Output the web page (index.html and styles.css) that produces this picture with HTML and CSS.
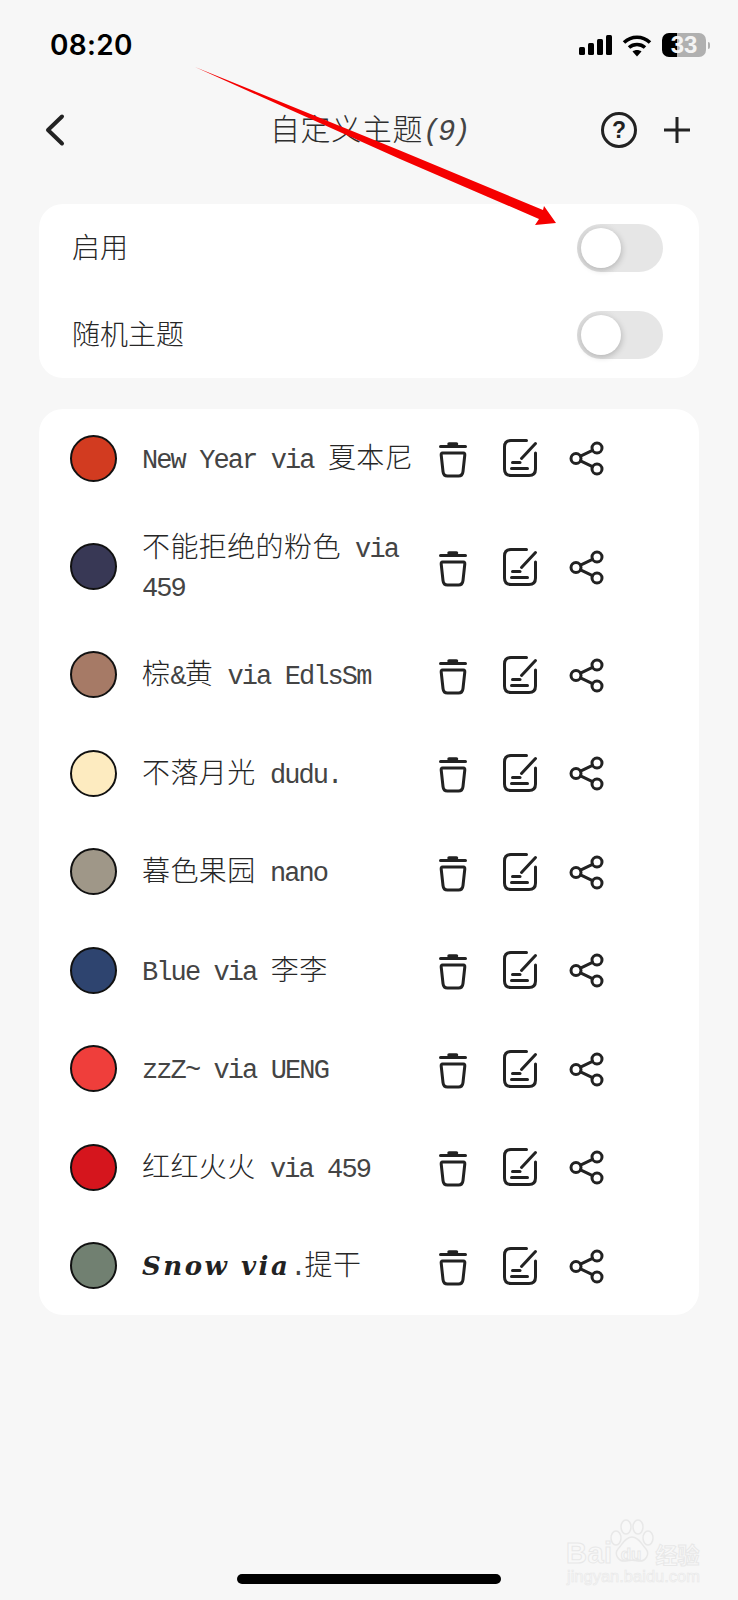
FILE: index.html
```html
<!DOCTYPE html>
<html lang="zh">
<head>
<meta charset="utf-8">
<title>自定义主题</title>
<link rel="stylesheet" href="styles.css">
</head>
<body>
<div class="page">
  <header class="status">
    <span class="time">08:20</span>
    <div class="status-icons">
      <svg class="signal" width="33" height="22" viewBox="0 0 33 22"><rect x="0" y="13" width="6" height="8" rx="1.5"/><rect x="9" y="9" width="6" height="12" rx="1.5"/><rect x="18" y="5" width="6" height="16" rx="1.5"/><rect x="27" y="1" width="6" height="20" rx="1.5"/></svg>
      <svg class="wifi" width="30" height="23" viewBox="0 0 30 23"><path d="M2 8.500C9.500 1.500 20.500 1.500 28 8.500" fill="none" stroke="#000" stroke-width="3.600"/><path d="M7 13.500C11.500 9.500 18.500 9.500 23 13.500" fill="none" stroke="#000" stroke-width="3.600"/><path d="M10.500 17.500C13 15.500 17 15.500 19.500 17.500L15 22.500Z"/></svg>
      <div class="battery-wrap"><div class="battery">33</div><span class="nub"></span></div>
    </div>
  </header>

  <nav class="nav">
    <svg class="back" width="22" height="34" viewBox="0 0 22 34"><path d="M19 3.500L5 17L19 30.500" fill="none" stroke="#222" stroke-width="4" stroke-linecap="round" stroke-linejoin="round"/></svg>
    <h1 class="title"><span class="han-title">自定义主题</span><span class="title-num">(9)</span></h1>
    <div class="nav-right">
      <span class="help">?</span>
      <svg class="plus" width="26" height="26" viewBox="0 0 26 26"><path d="M0.500 13H25.500M13 0.500V25.500" stroke="#222" stroke-width="3" stroke-linecap="round"/></svg>
    </div>
  </nav>

  <section class="card settings">
    <div class="setting"><span class="han label">启用</span><span class="toggle"><span class="thumb"></span></span></div>
    <div class="setting"><span class="han label">随机主题</span><span class="toggle"><span class="thumb"></span></span></div>
  </section>

  <section class="card themes">
    <div class="row">
      <span class="dot c1"></span>
      <div class="name">New Year via <span class="han">夏本尼</span></div>
      <div class="actions"><svg class="ic" viewBox="0 0 40 40"><use href="#trash"/></svg><svg class="ic" viewBox="0 0 40 40"><use href="#edit"/></svg><svg class="ic" viewBox="0 0 40 40"><use href="#share"/></svg></div>
    </div>
    <div class="row">
      <span class="dot c2"></span>
      <div class="name"><span class="han">不能拒绝的粉色</span> via 459</div>
      <div class="actions"><svg class="ic" viewBox="0 0 40 40"><use href="#trash"/></svg><svg class="ic" viewBox="0 0 40 40"><use href="#edit"/></svg><svg class="ic" viewBox="0 0 40 40"><use href="#share"/></svg></div>
    </div>
    <div class="row">
      <span class="dot c3"></span>
      <div class="name"><span class="han">棕</span>&amp;<span class="han">黄</span> via EdlsSm</div>
      <div class="actions"><svg class="ic" viewBox="0 0 40 40"><use href="#trash"/></svg><svg class="ic" viewBox="0 0 40 40"><use href="#edit"/></svg><svg class="ic" viewBox="0 0 40 40"><use href="#share"/></svg></div>
    </div>
    <div class="row">
      <span class="dot c4"></span>
      <div class="name"><span class="han">不落月光</span> dudu.</div>
      <div class="actions"><svg class="ic" viewBox="0 0 40 40"><use href="#trash"/></svg><svg class="ic" viewBox="0 0 40 40"><use href="#edit"/></svg><svg class="ic" viewBox="0 0 40 40"><use href="#share"/></svg></div>
    </div>
    <div class="row">
      <span class="dot c5"></span>
      <div class="name"><span class="han">暮色果园</span> nano</div>
      <div class="actions"><svg class="ic" viewBox="0 0 40 40"><use href="#trash"/></svg><svg class="ic" viewBox="0 0 40 40"><use href="#edit"/></svg><svg class="ic" viewBox="0 0 40 40"><use href="#share"/></svg></div>
    </div>
    <div class="row">
      <span class="dot c6"></span>
      <div class="name">Blue via <span class="han">李李</span></div>
      <div class="actions"><svg class="ic" viewBox="0 0 40 40"><use href="#trash"/></svg><svg class="ic" viewBox="0 0 40 40"><use href="#edit"/></svg><svg class="ic" viewBox="0 0 40 40"><use href="#share"/></svg></div>
    </div>
    <div class="row">
      <span class="dot c7"></span>
      <div class="name">zzZ~ via UENG</div>
      <div class="actions"><svg class="ic" viewBox="0 0 40 40"><use href="#trash"/></svg><svg class="ic" viewBox="0 0 40 40"><use href="#edit"/></svg><svg class="ic" viewBox="0 0 40 40"><use href="#share"/></svg></div>
    </div>
    <div class="row">
      <span class="dot c8"></span>
      <div class="name"><span class="han">红红火火</span> via 459</div>
      <div class="actions"><svg class="ic" viewBox="0 0 40 40"><use href="#trash"/></svg><svg class="ic" viewBox="0 0 40 40"><use href="#edit"/></svg><svg class="ic" viewBox="0 0 40 40"><use href="#share"/></svg></div>
    </div>
    <div class="row">
      <span class="dot c9"></span>
      <div class="name"><span class="fancy">Snow via</span>.<span class="han">提干</span></div>
      <div class="actions"><svg class="ic" viewBox="0 0 40 40"><use href="#trash"/></svg><svg class="ic" viewBox="0 0 40 40"><use href="#edit"/></svg><svg class="ic" viewBox="0 0 40 40"><use href="#share"/></svg></div>
    </div>
  </section>

  <svg class="arrow" width="738" height="240" viewBox="0 0 738 240"><polygon points="195,67 400,150.500 543,210 544,206 556,223 535,225 539,219 400,159" fill="#f50000"/></svg>

  <div class="watermark">
    <svg class="paw" width="46" height="46" viewBox="0 0 46 46"><g fill="#f8f8f8" stroke="#e8e8e8" stroke-width="1.500"><ellipse cx="17" cy="9" rx="5" ry="7"/><ellipse cx="29" cy="9" rx="5" ry="7"/><ellipse cx="7" cy="20" rx="5" ry="7"/><ellipse cx="39" cy="20" rx="5" ry="7"/><path d="M23 19C30 19 33 27 37 31C41 36 37 44 29 43C25 42 21 42 17 43C9 44 5 36 9 31C13 27 16 19 23 19Z"/></g></svg>
    <div class="wm-top"><span class="wm-bai">Bai</span><span class="wm-du">du</span><span class="wm-jy">经验</span></div>
    <div class="wm-url">jingyan.baidu.com</div>
  </div>

  <div class="home"></div>
</div>

<svg class="defs" width="0" height="0" aria-hidden="true">
  <defs>
    <g id="trash" fill="none" stroke="#222" stroke-width="3" stroke-linecap="round" stroke-linejoin="round">
      <path d="M7.500 8.500H32.500"/>
      <path d="M16 6H23.500" stroke-width="3.500"/>
      <path d="M9.500 15H30.500Q32 15 31.800 17L30 33.500Q29.500 38 25.500 38H14.500Q10.500 38 10 33.500L8.200 17Q8 15 9.500 15Z"/>
    </g>
    <g id="edit" fill="none" stroke="#222" stroke-width="3" stroke-linecap="round" stroke-linejoin="round">
      <path d="M26.500 2.500H11Q4.500 2.500 4.500 9V31Q4.500 37.500 11 37.500H29Q35.500 37.500 35.500 31V15"/>
      <path d="M35.500 5.500L21.500 20.500"/>
      <path d="M12.500 24.500H20"/>
      <path d="M11.500 30.500H27.500"/>
    </g>
    <g id="share" fill="none" stroke="#222" stroke-width="3" stroke-linecap="round">
      <circle cx="9" cy="20.500" r="5"/>
      <circle cx="30" cy="10" r="5"/>
      <circle cx="30" cy="31" r="5"/>
      <path d="M13.500 18.200L25.500 12.300M13.500 22.800L25.500 28.700"/>
    </g>
  </defs>
</svg>
</body>
</html>
```

FILE: styles.css
```css
* { box-sizing: border-box; }

html, body {
  margin: 0;
  padding: 0;
  background: #f7f7f7;
}

.page {
  position: relative;
  width: 738px;
  height: 1600px;
  overflow: hidden;
  background: #f7f7f7;
  color: #2b2b2b;
  font-family: "Liberation Mono", "Noto Sans CJK SC", monospace;
}

.defs { position: absolute; }

/* status bar */
.status {
  height: 90px;
  display: flex;
  align-items: center;
  justify-content: space-between;
  padding: 0 28px 0 50px;
}

.time {
  font-family: Inter, "Liberation Sans", sans-serif;
  font-weight: 600;
  font-size: 28px;
  color: #000;
  letter-spacing: 0.3px;
}

.status-icons {
  display: flex;
  align-items: center;
  gap: 10px;
}

.signal { fill: #000; }
.wifi { fill: #000; }

.battery-wrap {
  display: flex;
  align-items: center;
  gap: 2px;
}

.battery {
  width: 44px;
  height: 24px;
  border-radius: 7px;
  background: linear-gradient(90deg, #000 0, #000 15px, #b0b0b0 15px);
  color: #f4f4f4;
  font-family: "Liberation Sans", sans-serif;
  font-weight: 700;
  font-size: 24px;
  line-height: 24px;
  text-align: center;
}

.nub {
  width: 2px;
  height: 7px;
  background: #b0b0b0;
  border-radius: 0 2px 2px 0;
}

/* navigation */
.nav {
  height: 80px;
  display: grid;
  grid-template-columns: 1fr auto 1fr;
  align-items: center;
  padding: 0 43px;
}

.title {
  margin: 0;
  font-weight: 300;
  font-size: 30px;
  line-height: 40px;
  color: #2e2e2e;
  display: flex;
  align-items: baseline;
}

.han-title {
  font-family: "Noto Sans CJK SC", sans-serif;
  font-weight: 300;
  letter-spacing: 0.6px;
}

.title-num {
  font-family: "Liberation Mono", monospace;
  font-size: 29px;
  letter-spacing: -2.400px;
  font-style: italic;
  font-weight: 400;
  color: #444;
}

.nav-right {
  justify-self: end;
  display: flex;
  align-items: center;
  gap: 27px;
  margin-right: 5px;
}

.help {
  width: 36px;
  height: 36px;
  border: 3px solid #222;
  border-radius: 50%;
  display: flex;
  align-items: center;
  justify-content: center;
  font-family: "Liberation Sans", sans-serif;
  font-weight: 700;
  font-size: 23px;
  color: #222;
}

/* cards */
.card {
  margin: 0 39px;
  background: #fff;
  border-radius: 24px;
}

.settings { margin-top: 34px; }
.themes { margin-top: 31px; }

.setting {
  height: 87px;
  display: flex;
  align-items: center;
  justify-content: space-between;
  padding: 0 36px 0 33px;
}

.setting .label {
  margin-bottom: 3px;
  letter-spacing: 0;
}

.toggle {
  position: relative;
  display: block;
  width: 86px;
  height: 48px;
  border-radius: 24px;
  background: linear-gradient(90deg, #d9d9d9 0, #e6e6e6 45%, #e6e6e6 100%);
}

.thumb {
  position: absolute;
  left: 4px;
  top: 4px;
  width: 40px;
  height: 40px;
  border-radius: 50%;
  background: #fff;
  box-shadow: 1px 2px 6px rgba(0, 0, 0, 0.2);
}

/* theme rows */
.row {
  min-height: 98.500px;
  padding: 17px 0 17px 31px;
  display: flex;
  align-items: center;
}

.dot {
  flex: none;
  width: 47px;
  height: 47px;
  border-radius: 50%;
  border: 2px solid #111;
}

.c1 { background: #d23b20; }
.c2 { background: #383855; }
.c3 { background: #a67a66; }
.c4 { background: #fdebc0; }
.c5 { background: #9f9788; }
.c6 { background: #2e446f; }
.c7 { background: #ef3e3b; }
.c8 { background: #d5151d; }
.c9 { background: #718071; }

.name {
  flex: none;
  width: 278px;
  margin-left: 25px;
  padding-top: 6px;
  font-size: 27px;
  line-height: 39px;
  letter-spacing: -1.900px;
  color: #444;
}

.han {
  font-family: "Noto Sans CJK SC", sans-serif;
  font-size: 28px;
  line-height: 1;
  font-weight: 300;
  letter-spacing: 0.400px;
  color: #262626;
}

.fancy {
  font-family: "DejaVu Serif", serif;
  font-weight: 700;
  font-style: italic;
  font-size: 26px;
  line-height: 1;
  letter-spacing: 2.500px;
  color: #222;
}

.actions {
  flex: none;
  display: flex;
  gap: 27px;
  margin-left: 13px;
}

.ic {
  width: 40px;
  height: 40px;
  display: block;
}

/* overlays */
.arrow {
  position: absolute;
  left: 0;
  top: 0;
  pointer-events: none;
}

.home {
  position: absolute;
  left: 237px;
  top: 1574px;
  width: 264px;
  height: 10px;
  border-radius: 5px;
  background: #000;
}

.watermark {
  position: absolute;
  left: 565px;
  top: 1518px;
  width: 135px;
  height: 66px;
  font-family: "Liberation Sans", sans-serif;
}

.paw {
  position: absolute;
  left: 44px;
  top: 0;
}

.wm-top {
  position: absolute;
  left: 1px;
  top: 22px;
  display: flex;
  align-items: center;
  white-space: nowrap;
  color: #f8f8f8;
  -webkit-text-stroke: 1px #e8e8e8;
  font-weight: 700;
}

.wm-bai { font-size: 29px; line-height: 26px; letter-spacing: 0.5px; }
.wm-du { font-size: 17px; line-height: 20px; margin-left: 8px; margin-top: 4px; }
.wm-jy {
  font-family: "Noto Sans CJK SC", sans-serif;
  font-size: 22px;
  line-height: 26px;
  margin-left: 14px;
}

.wm-url {
  position: absolute;
  left: 2px;
  top: 50px;
  font-size: 16.500px;
  line-height: 16px;
  white-space: nowrap;
  color: #f8f8f8;
  -webkit-text-stroke: 0.6px #e8e8e8;
}
```
